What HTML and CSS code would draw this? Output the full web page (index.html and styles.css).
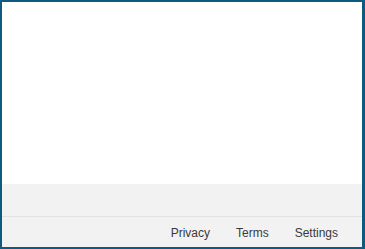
FILE: index.html
```html
<!DOCTYPE html>
<html>
<head>
<meta charset="utf-8">
<link rel="stylesheet" href="styles.css">
</head>
<body>
<div class="frame">
  <main class="content"></main>
  <footer class="footer">
    <div class="footer-top"></div>
    <nav class="footer-links">
      <a href="#" class="link">Privacy</a>
      <a href="#" class="link">Terms</a>
      <a href="#" class="link">Settings</a>
    </nav>
  </footer>
</div>
</body>
</html>
```
FILE: styles.css
```css
html, body {
  margin: 0;
  padding: 0;
  background: #ffffff;
}
.frame {
  width: 365px;
  height: 249px;
  box-sizing: border-box;
  border: 2px solid #0e5a80;
  border-right-width: 3px;
  display: flex;
  flex-direction: column;
  font-family: "Liberation Sans", Arial, sans-serif;
}
.content {
  flex: 1;
  background: #ffffff;
}
.footer {
  background: #f2f2f2;
  height: 63px;
  display: flex;
  flex-direction: column;
}
.footer-top {
  height: 32px;
  border-bottom: 1px solid #e2e2e2;
}
.footer-links {
  flex: 1;
  display: flex;
  justify-content: flex-end;
  align-items: center;
  padding-top: 2px;
  padding-right: 11px;
}
.link {
  font-size: 12px;
  color: #3a3a3a;
  text-decoration: none;
  margin: 0 13px;
}
```
